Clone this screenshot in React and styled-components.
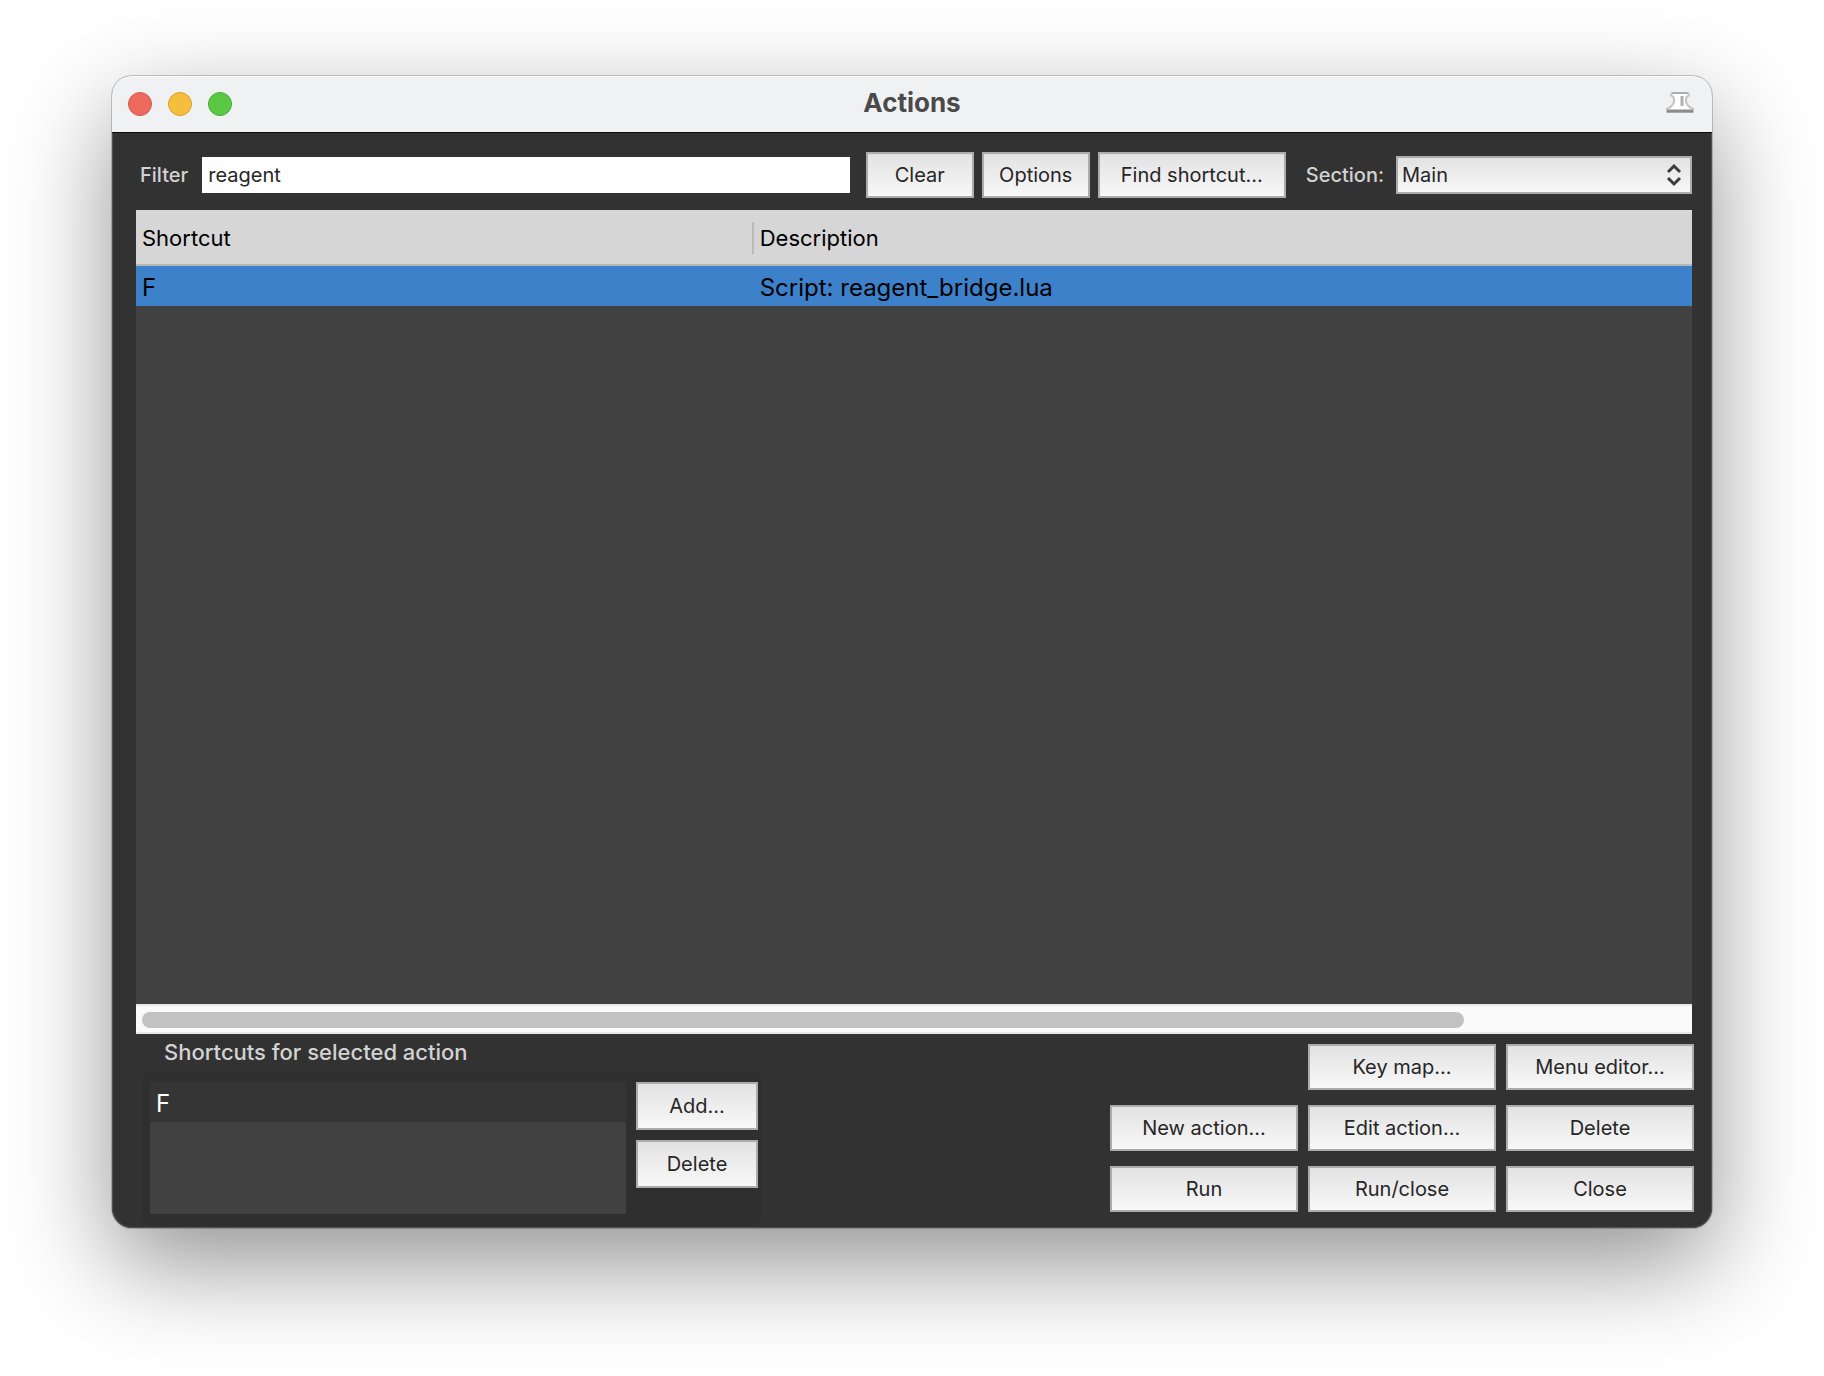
import React, { useState } from "react";
import styled, { createGlobalStyle } from "styled-components";

const ACTIONS = [{ shortcut: "F", description: "Script: reagent_bridge.lua" }];

const App = () => {
  const [filter, setFilter] = useState("reagent");

  return (
    <>
      <GlobalStyle />
      <Desktop>
        <Window>
          <TitleBar>
            <Lights>
              <Light type="button" aria-label="Close window" $color="#ef6a5e" $edge="#d8574b" />
              <Light type="button" aria-label="Minimize" $color="#f5bf3d" $edge="#d9a02c" />
              <Light type="button" aria-label="Zoom" $color="#5bc845" $edge="#47ab33" />
            </Lights>
            <Title>Actions</Title>
            <PinButton type="button" aria-label="Pin window">
              <PinIcon />
            </PinButton>
          </TitleBar>

          <Body>
            <Toolbar>
              <Label htmlFor="filter">Filter</Label>
              <FilterInput
                id="filter"
                type="text"
                value={filter}
                onChange={(e) => setFilter(e.target.value)}
              />
              <ToolbarButtons>
                <Button type="button" $width={108}>Clear</Button>
                <Button type="button" $width={108}>Options</Button>
                <Button type="button" $width={188}>Find shortcut...</Button>
              </ToolbarButtons>
              <Label htmlFor="section">Section:</Label>
              <SelectWrap>
                <Select id="section" defaultValue="Main">
                  <option>Main</option>
                </Select>
                <Chevrons viewBox="0 0 16 24" aria-hidden="true">
                  <path d="M2 9 L8 3 L14 9 M2 15 L8 21 L14 15" />
                </Chevrons>
              </SelectWrap>
            </Toolbar>

            <ListPane>
              <Table>
                <thead>
                  <tr>
                    <Th $width="39.7%">
                      <ThInner $divider>Shortcut</ThInner>
                    </Th>
                    <Th>
                      <ThInner>Description</ThInner>
                    </Th>
                  </tr>
                </thead>
                <tbody>
                  {ACTIONS.map((action) => (
                    <SelectedRow key={action.description}>
                      <Td>{action.shortcut}</Td>
                      <Td>{action.description}</Td>
                    </SelectedRow>
                  ))}
                </tbody>
              </Table>
              <ScrollTrack>
                <ScrollThumb />
              </ScrollTrack>
            </ListPane>

            <Footer>
              <Shortcuts aria-labelledby="shortcuts-title">
                <ShortcutsTitle id="shortcuts-title">
                  Shortcuts for selected action
                </ShortcutsTitle>
                <Group>
                  <ShortcutList>
                    <ShortcutItem>F</ShortcutItem>
                  </ShortcutList>
                  <GroupButtons>
                    <Button type="button" $width={122} $height={48}>Add...</Button>
                    <Button type="button" $width={122} $height={48}>Delete</Button>
                  </GroupButtons>
                </Group>
              </Shortcuts>

              <ActionGrid>
                <KeyMapButton type="button">Key map...</KeyMapButton>
                <Button type="button">Menu editor...</Button>
                <Button type="button">New action...</Button>
                <Button type="button">Edit action...</Button>
                <Button type="button">Delete</Button>
                <Button type="button">Run</Button>
                <Button type="button">Run/close</Button>
                <Button type="button">Close</Button>
              </ActionGrid>
            </Footer>
          </Body>
        </Window>
      </Desktop>
    </>
  );
};

const PinIcon = () => (
  <svg width="32" height="24" viewBox="0 0 32 24" aria-hidden="true">
    <path
      d="M8 2 H24 L25 4 L22 7 V11 Q23 15 29 18 V21 H3 V18 Q9 15 10 11 V7 L7 4 Z"
      fill="#fff"
      stroke="#c4c4c4"
      strokeWidth="2"
      strokeLinejoin="round"
    />
    <path d="M8 2 H24" stroke="#aeaeae" strokeWidth="2" />
    <path d="M3 20 H29" stroke="#8c8c8c" strokeWidth="3" />
    <path d="M18 5 V15" stroke="#b0b0b0" strokeWidth="3" />
  </svg>
);

const GlobalStyle = createGlobalStyle`
  * {
    box-sizing: border-box;
  }

  body {
    margin: 0;
    background: #fff;
    font-family: Inter, "Liberation Sans", sans-serif;
  }

  button, input, select {
    font-family: inherit;
  }
`;

const Desktop = styled.div`
  display: flex;
  min-height: 100vh;
  padding: 76px 112px 148px;
  overflow: hidden;
`;

const Window = styled.main`
  display: flex;
  flex: 1;
  flex-direction: column;
  min-width: 0;
  border-radius: 20px;
  background: #323232;
  box-shadow:
    0 0 0 1px rgba(0, 0, 0, 0.2),
    inset 0 0 0 1px #505050,
    0 36px 100px rgba(0, 0, 0, 0.43);
`;

const TitleBar = styled.header`
  display: grid;
  grid-template-columns: 1fr auto 1fr;
  align-items: center;
  height: 57px;
  padding: 0 16px;
  border-bottom: 1px solid #0c0c0c;
  border-radius: 20px 20px 0 0;
  background: #f0f1f3;
  box-shadow: inset 0 1px 0 #fff;
`;

const Lights = styled.div`
  display: flex;
  gap: 16px;
`;

const Light = styled.button`
  width: 24px;
  height: 24px;
  padding: 0;
  border: 1px solid ${(props) => props.$edge};
  border-radius: 50%;
  background: ${(props) => props.$color};
`;

const Title = styled.h1`
  margin: 0;
  padding-bottom: 2px;
  color: #4a4a4a;
  font-size: 26px;
  font-weight: 700;
  line-height: 32px;
`;

const PinButton = styled.button`
  display: flex;
  justify-self: end;
  padding: 0 0 2px;
  border: 0;
  background: none;
`;

const Body = styled.div`
  display: flex;
  flex: 1;
  flex-direction: column;
  padding: 19px 18px 2px 24px;
`;

const Toolbar = styled.div`
  display: flex;
  align-items: center;
  margin: 0 2px 12px 4px;
`;

const Label = styled.label`
  color: #d2d2d2;
  font-size: 20px;
  font-weight: 500;
  line-height: 24px;
`;

const FilterInput = styled.input`
  flex: 1;
  min-width: 0;
  height: 36px;
  margin: 0 16px 0 14px;
  padding: 0 6px;
  border: 0;
  outline: 0;
  background: #fff;
  color: #262626;
  font-size: 20px;
`;

const ToolbarButtons = styled.div`
  display: flex;
  gap: 8px;
  margin-right: 20px;
`;

const Button = styled.button`
  width: ${(props) => (props.$width ? `${props.$width}px` : "auto")};
  height: ${(props) => props.$height || 46}px;
  padding: 0;
  border: 2px solid #acacac;
  background: linear-gradient(#e2e2e2, #f8f8f8);
  color: #262626;
  font-size: 20px;
  line-height: 24px;
  white-space: nowrap;
`;

const SelectWrap = styled.div`
  position: relative;
  width: 296px;
  margin-left: 12px;
`;

const Select = styled.select`
  display: block;
  width: 100%;
  height: 38px;
  padding: 0 40px 0 4px;
  border: 2px solid #acacac;
  border-radius: 0;
  appearance: none;
  background: linear-gradient(#e2e2e2, #f8f8f8);
  color: #262626;
  font-size: 20px;
`;

const Chevrons = styled.svg`
  position: absolute;
  top: 7px;
  right: 10px;
  width: 16px;
  height: 24px;
  fill: none;
  stroke: #3c3c3c;
  stroke-width: 3;
  pointer-events: none;
`;

const ListPane = styled.section`
  display: flex;
  flex: 1;
  flex-direction: column;
  justify-content: space-between;
  margin-right: 2px;
  background: #414141;
`;

const Table = styled.table`
  width: 100%;
  table-layout: fixed;
  border-spacing: 0;
  color: #000;
`;

const Th = styled.th`
  width: ${(props) => props.$width || "auto"};
  height: 56px;
  padding: 2px 0 0;
  border-bottom: 2px solid #b8b8b8;
  background: #d6d6d6;
  font-size: 22px;
  font-weight: 400;
  text-align: left;
`;

const ThInner = styled.div`
  padding-left: 6px;
  border-right: ${(props) => (props.$divider ? "2px solid #bababa" : "0")};
  line-height: 32px;
`;

const SelectedRow = styled.tr`
  background: #3d81cb;
`;

const Td = styled.td`
  height: 40px;
  padding: 4px 6px 0;
  font-size: 24px;
  line-height: 28px;
`;

const ScrollTrack = styled.div`
  height: 30px;
  padding: 6px;
  border: solid #e8e8e8;
  border-width: 2px 0;
  background: #fafafa;
`;

const ScrollThumb = styled.div`
  width: 85.6%;
  height: 16px;
  border-radius: 8px;
  background: #c2c2c2;
`;

const Footer = styled.div`
  display: flex;
  justify-content: space-between;
  align-items: flex-start;
`;

const Shortcuts = styled.section`
  flex: 0 1 620px;
  margin-left: 6px;
`;

const ShortcutsTitle = styled.h2`
  margin: 0;
  padding: 0 22px 2px;
  color: #d2d2d2;
  font-size: 22px;
  font-weight: 500;
  line-height: 36px;
`;

const Group = styled.div`
  display: flex;
  gap: 10px;
  padding: 10px 4px 12px 8px;
  border-radius: 10px;
  background: #2f2f2f;
`;

const ShortcutList = styled.ul`
  flex: 1;
  height: 132px;
  margin: 0;
  padding: 0;
  background: #414141;
  list-style: none;
`;

const ShortcutItem = styled.li`
  padding: 4px 6px 0;
  background: #353535;
  color: #fff;
  font-size: 24px;
  line-height: 36px;
`;

const GroupButtons = styled.div`
  display: flex;
  flex-direction: column;
  gap: 10px;
`;

const ActionGrid = styled.div`
  display: grid;
  grid-template-columns: repeat(3, 188px);
  gap: 15px 10px;
  margin-top: 10px;
`;

// first row only has two buttons, so leave the first column empty
const KeyMapButton = styled(Button)`
  grid-column: 2;
`;

export default App;
